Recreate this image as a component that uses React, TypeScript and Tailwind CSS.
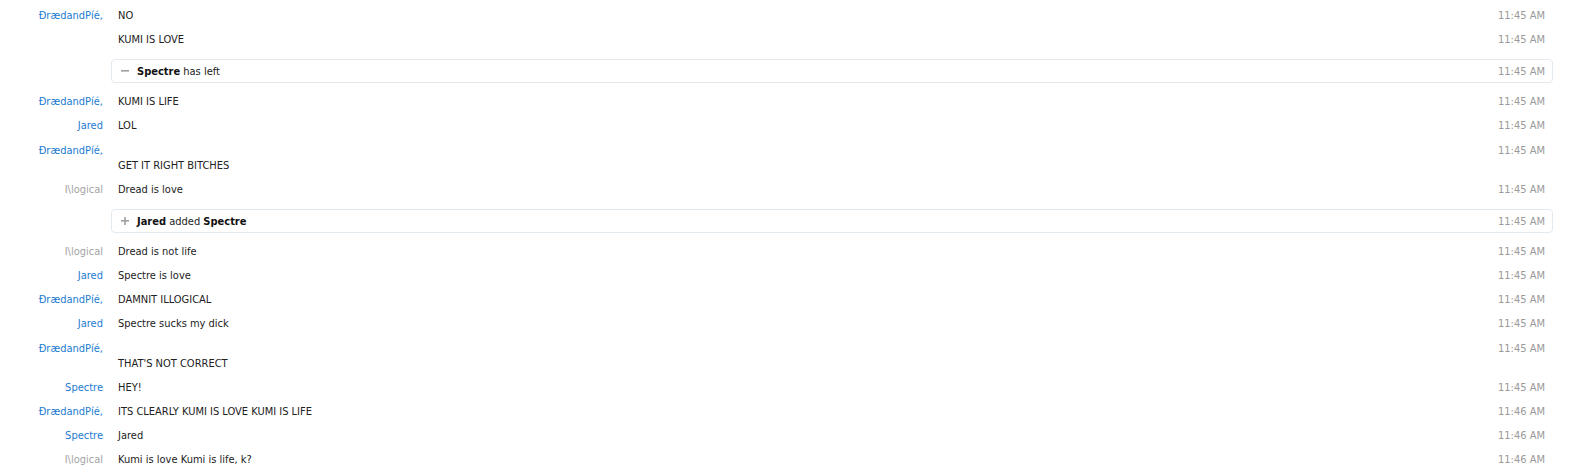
import React from 'react'

type Msg =
  | { kind: 'msg'; name?: string; gray?: boolean; text: string; time: string; wrap?: boolean }
  | { kind: 'event'; icon: '+' | '-'; body: React.ReactNode; time: string }

const DREAD = 'ĐrædandPíé,'
const ILL = 'I\\logical'

const rows: Msg[] = [
  { kind: 'msg', name: DREAD, text: 'NO', time: '11:45 AM' },
  { kind: 'msg', text: 'KUMI IS LOVE', time: '11:45 AM' },
  {
    kind: 'event',
    icon: '-',
    body: (
      <>
        <b className="font-bold text-[#111]">Spectre</b> has left
      </>
    ),
    time: '11:45 AM',
  },
  { kind: 'msg', name: DREAD, text: 'KUMI IS LIFE', time: '11:45 AM' },
  { kind: 'msg', name: 'Jared', text: 'LOL', time: '11:45 AM' },
  { kind: 'msg', name: DREAD, text: 'GET IT RIGHT BITCHES', time: '11:45 AM', wrap: true },
  { kind: 'msg', name: ILL, gray: true, text: 'Dread is love', time: '11:45 AM' },
  {
    kind: 'event',
    icon: '+',
    body: (
      <>
        <b className="font-bold text-[#111]">Jared</b> added <b className="font-bold text-[#111]">Spectre</b>
      </>
    ),
    time: '11:45 AM',
  },
  { kind: 'msg', name: ILL, gray: true, text: 'Dread is not life', time: '11:45 AM' },
  { kind: 'msg', name: 'Jared', text: 'Spectre is love', time: '11:45 AM' },
  { kind: 'msg', name: DREAD, text: 'DAMNIT ILLOGICAL', time: '11:45 AM' },
  { kind: 'msg', name: 'Jared', text: 'Spectre sucks my dick', time: '11:45 AM' },
  { kind: 'msg', name: DREAD, text: "THAT'S NOT CORRECT", time: '11:45 AM', wrap: true },
  { kind: 'msg', name: 'Spectre', text: 'HEY!', time: '11:45 AM' },
  { kind: 'msg', name: DREAD, text: 'ITS CLEARLY KUMI IS LOVE KUMI IS LIFE', time: '11:46 AM' },
  { kind: 'msg', name: 'Spectre', text: 'Jared', time: '11:46 AM' },
  { kind: 'msg', name: ILL, gray: true, text: 'Kumi is love Kumi is life, k?', time: '11:46 AM' },
]

function EventIcon({ icon }: { icon: '+' | '-' }) {
  return (
    <svg width="8" height="8" viewBox="0 0 8 8" className="shrink-0">
      <rect x="0" y="3" width="8" height="1.6" fill="#a0a0a0" />
      {icon === '+' && <rect x="3.2" y="0" width="1.6" height="8" fill="#a0a0a0" />}
    </svg>
  )
}

export default function App() {
  return (
    <div
      className="min-h-screen w-full bg-white pt-[3px] text-[11px] leading-[15px] text-[#222]"
      style={{ fontFamily: '"DejaVu Sans Condensed", "Open Sans", sans-serif' }}
    >
      {rows.map((r, i) =>
        r.kind === 'msg' ? (
          <div key={i} className={`flex pb-[4px] pr-[27px] ${r.wrap ? 'pt-[6px]' : 'pt-[5px]'}`}>
            <div
              className={`w-[103px] shrink-0 text-right ${r.gray ? 'text-[#a3a3a3]' : 'text-[#1b7bd0]'}`}
            >
              {r.name ?? ''}
            </div>
            <div className="ml-[15px] flex-1">
              {r.wrap && <br />}
              {r.text}
            </div>
            <div className="shrink-0 text-[#999]">{r.time}</div>
          </div>
        ) : (
          <div key={i} className="pt-[8px] pb-[6px] pl-[111px] pr-[19px]">
            <div className="flex h-[24px] items-center rounded-[4px] border border-[#e2eaf0] pl-[9px] pr-[7px]">
              <EventIcon icon={r.icon} />
              <div className="ml-[8px] flex-1">{r.body}</div>
              <div className="shrink-0 text-[#999]">{r.time}</div>
            </div>
          </div>
        ),
      )}
    </div>
  )
}
